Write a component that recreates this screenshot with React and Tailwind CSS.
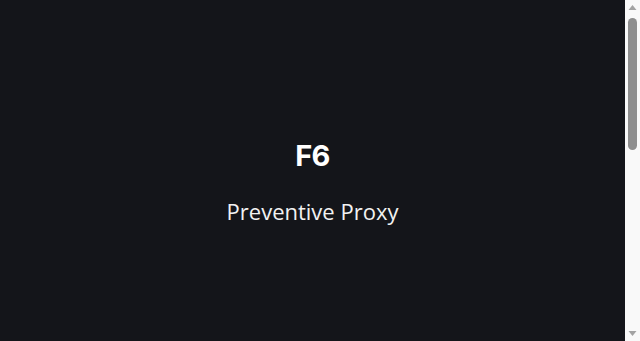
import React from "react";

function Scrollbar() {
  return (
    <div className="w-[15px] shrink-0 bg-[#f9f9f9] flex flex-col items-center">
      <svg width="15" height="15" viewBox="0 0 15 15" className="shrink-0">
        <path d="M3.5 10 L7.5 5 L11.5 10 Z" fill="#a3a3a3" />
      </svg>
      <div className="mt-[3px] h-[132px] w-[9px] rounded-[5px] bg-[#8e8e8e]" />
      <div className="flex-1" />
      <svg width="15" height="15" viewBox="0 0 15 15" className="shrink-0">
        <path d="M3.5 5 L11.5 5 L7.5 10 Z" fill="#a3a3a3" />
      </svg>
    </div>
  );
}

export default function App() {
  return (
    <div className="h-[341px] w-full flex bg-[#14151a] text-white overflow-hidden">
      <main className="flex-1 min-w-0">
        <section className="h-[362px] flex flex-col items-center justify-center">
          <h1 className="font-['Inter',sans-serif] text-[29px] font-bold leading-none tracking-tight">
            F6
          </h1>
          <p className="mt-[30px] font-['Open_Sans',sans-serif] text-[22px] leading-none text-[#f2f2f2]">
            Preventive Proxy
          </p>
        </section>
      </main>
      <Scrollbar />
    </div>
  );
}
